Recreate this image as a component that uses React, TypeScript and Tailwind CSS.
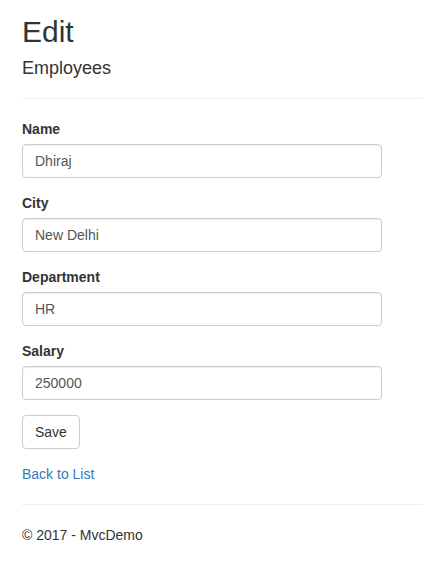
import React from "react";

const font = { fontFamily: '"Liberation Sans", Arial, Helvetica, sans-serif' };

function Field({ label, value }: { label: string; value: string }) {
  return (
    <div className="mb-[15px]">
      <label className="mb-[5px] block text-[14px] font-bold leading-[20px] text-[#333]">{label}</label>
      <input
        type="text"
        defaultValue={value}
        className="block h-[34px] w-[360px] rounded-[4px] border border-[#ccc] bg-white px-[12px] py-[6px] text-[14px] leading-[20px] text-[#555] shadow-[inset_0_1px_1px_rgba(0,0,0,0.075)] outline-none"
        style={font}
      />
    </div>
  );
}

export default function App() {
  return (
    <div className="min-h-[570px] bg-white pl-[22px] pt-[15px] text-[14px] leading-[20px] text-[#333]" style={font}>
      <h2 className="mb-[10px] text-[30px] font-normal leading-[33px]">Edit</h2>
      <h4 className="text-[18px] font-normal leading-[20px]">Employees</h4>
      <hr className="my-[20px] border-0 border-t border-[#eee]" />
      <form>
        <Field label="Name" value="Dhiraj" />
        <Field label="City" value="New Delhi" />
        <Field label="Department" value="HR" />
        <Field label="Salary" value="250000" />
        <div className="mb-[15px]">
          <button
            type="button"
            className="h-[34px] rounded-[4px] border border-[#ccc] bg-white px-[12px] py-[6px] text-[14px] leading-[20px] text-[#333]"
            style={font}
          >
            Save
          </button>
        </div>
      </form>
      <div className="leading-[20px]">
        <a href="#" className="text-[#337ab7] no-underline">Back to List</a>
      </div>
      <hr className="my-[20px] border-0 border-t border-[#eee]" />
      <footer>
        <p className="mb-[10px] leading-[20px]">© 2017 - MvcDemo</p>
      </footer>
    </div>
  );
}
